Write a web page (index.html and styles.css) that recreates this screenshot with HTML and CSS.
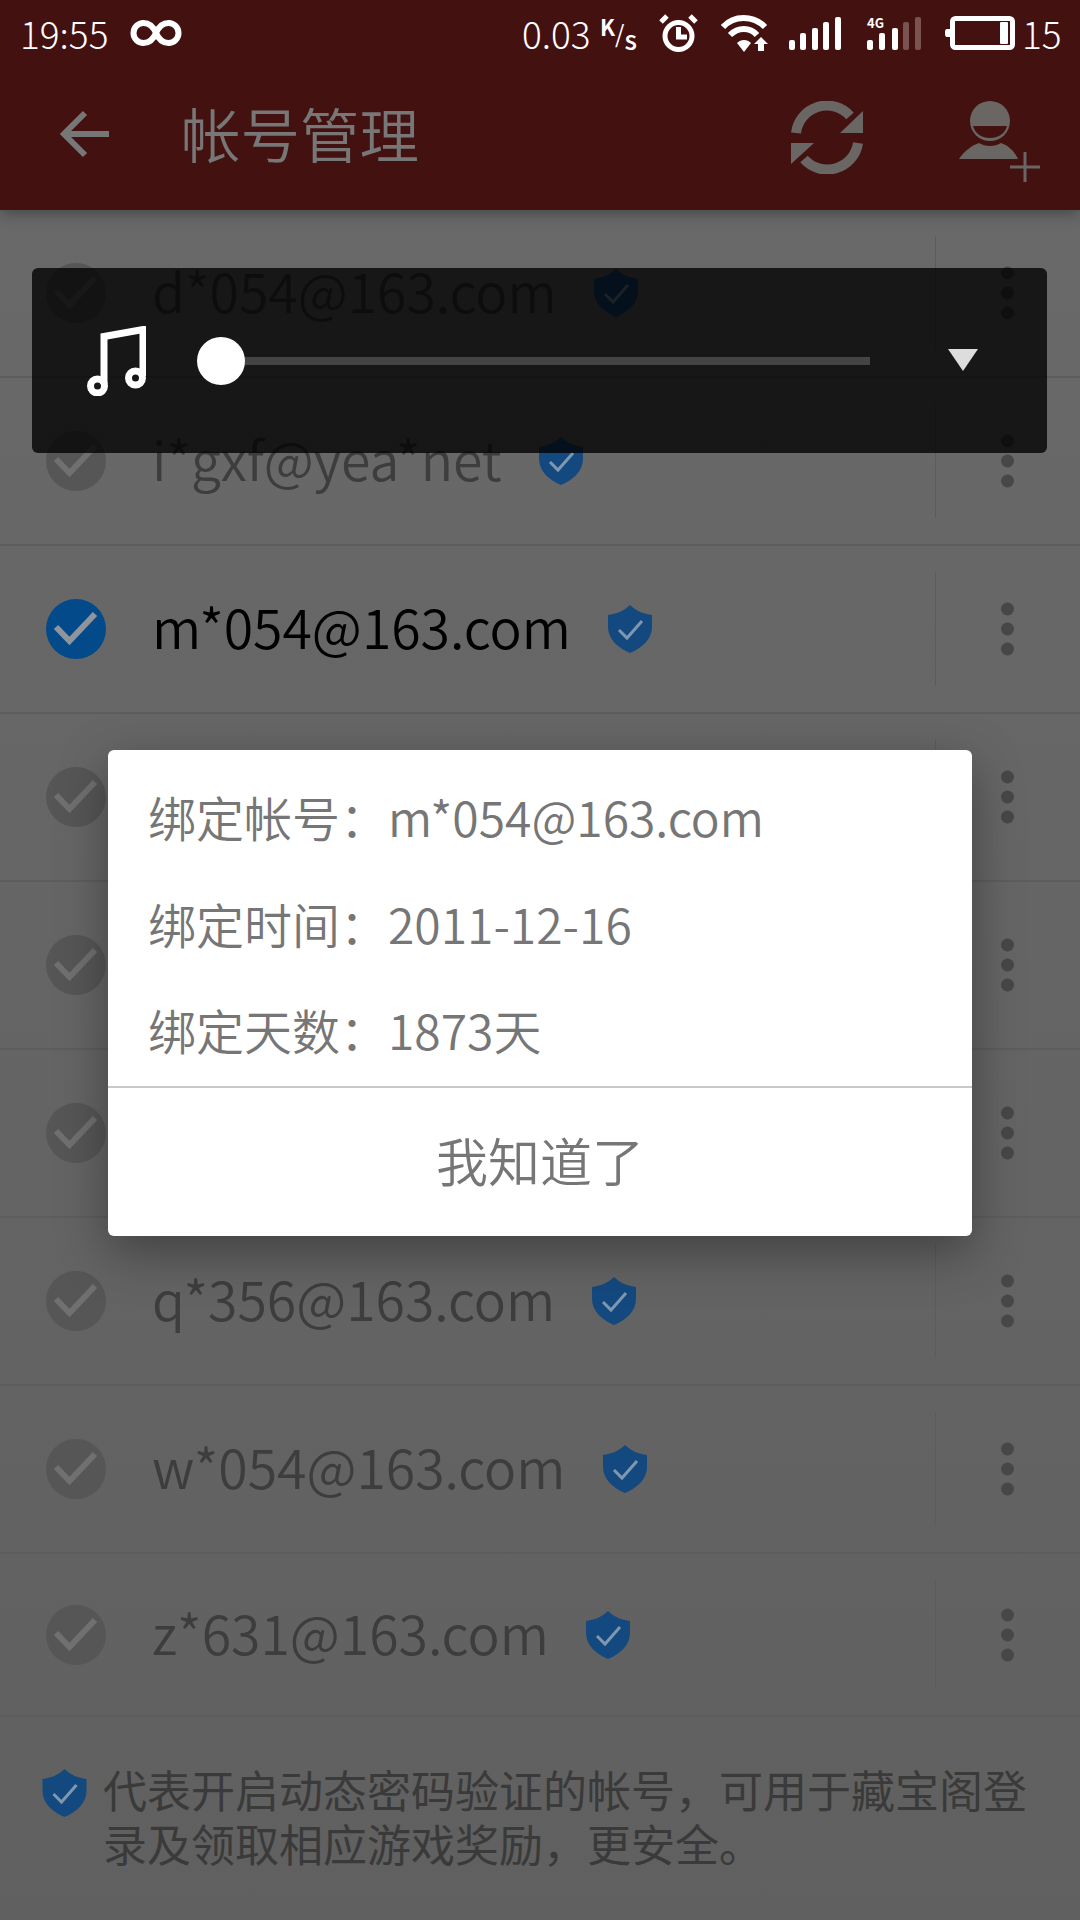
FILE: index.html
```html
<!DOCTYPE html>
<html lang="zh-CN">
<head>
<meta charset="utf-8">
<title>帐号管理</title>
<link rel="stylesheet" href="styles.css">
</head>
<body>
<svg class="defs" width="0" height="0" aria-hidden="true">
  <symbol id="check" viewBox="0 0 60 60">
    <circle class="check-disc" cx="30" cy="30" r="30"/>
    <path class="check-mark" d="M10 28 L23.500 42 L49 15"/>
  </symbol>
  <symbol id="shield" viewBox="0 0 44 48">
    <path class="shield-body" d="M22 0 C28 6 36 9 44 10 V22 C44 34 34 43 22 48 C10 43 0 34 0 22 V10 C8 9 16 6 22 0Z"/>
    <path class="shield-mark" d="M11 25 L19 33 L34 16"/>
  </symbol>
</svg>
<div class="screen">
  <header class="top">
    <div class="status">
      <div class="status-left">
        <span class="time">19:55</span>
        <svg class="infinity" viewBox="0 0 52 26"><path d="M26 13 C23 6 19 3 13.500 3 A10 10 0 0 0 13.500 23 C19 23 23 20 26 13 C29 6 33 3 38.500 3 A10 10 0 0 1 38.500 23 C33 23 29 20 26 13Z"/></svg>
      </div>
      <div class="status-right">
        <span class="rate">0.03</span>
        <span class="unit"><span class="unit-k">K</span><span class="unit-slash">/</span><span class="unit-s">s</span></span>
        <svg class="alarm" viewBox="0 0 39 38"><circle cx="19.500" cy="22" r="13.500"/><path d="M19.500 13 V23 H28"/><path d="M2 8 L8 2 M37 8 L31 2"/></svg>
        <svg class="wifi" viewBox="0 0 47 38"><path class="wifi-arc" d="M2 13 C13 1 32 1 44 13"/><path class="wifi-arc" d="M9 21 C17 13 29 13 36 21"/><path class="wifi-dot" d="M16 29 C20 25 26 25 30 29 L23 38Z"/><path class="wifi-dot" d="M40 23 L47 30 H43 V37 H37 V30 H33Z"/></svg>
        <svg class="signal" viewBox="0 0 55 34"><rect x="0" y="24" width="6" height="10" rx="2"/><rect x="11" y="17" width="6" height="17" rx="2"/><rect x="23" y="12" width="6" height="22" rx="2"/><rect x="34" y="6" width="6" height="28" rx="2"/><rect x="46" y="1" width="6" height="33" rx="2"/></svg>
        <div class="signal-4g">
          <span class="tag-4g">4G</span>
          <svg class="signal-b" viewBox="0 0 55 34"><rect x="0" y="24" width="6" height="10" rx="2"/><rect x="12" y="17" width="6" height="17" rx="2"/><rect x="25" y="12" width="6" height="22" rx="2"/><rect class="bar-off" x="36" y="6" width="6" height="28" rx="2"/><rect class="bar-off" x="48" y="1" width="6" height="33" rx="2"/></svg>
        </div>
        <svg class="battery" viewBox="0 0 70 34"><path class="battery-nub" d="M5 13 H2 Q0 13 0 16 V18 Q0 21 2 21 H5Z"/><rect class="battery-shell" x="7.500" y="2.500" width="60" height="29" rx="3"/><rect class="battery-level" x="55" y="6" width="8" height="22" rx="1"/></svg>
        <span class="level">15</span>
      </div>
    </div>
    <div class="toolbar">
      <svg class="back" viewBox="0 0 50 48"><path d="M49 24 H5 M25 3 L4 24 L25 45"/></svg>
      <h1 class="title">帐号管理</h1>
      <svg class="sync" viewBox="0 0 72 73"><path class="sync-arc" d="M5 32 A31 31 0 0 1 59 15"/><path class="sync-arc" d="M67 42 A31 31 0 0 1 13 58"/><path class="sync-head" d="M72 10 V32 H49Z M0 42 H23 L0 63Z"/></svg>
      <svg class="add-user" viewBox="0 0 82 82"><circle class="user-fill" cx="31" cy="20" r="20"/><path class="user-cut" d="M14 25 H48 C46 33 39 37 31 37 C23 37 16 33 14 25Z"/><path class="user-fill" d="M0 58 C6 49 14 44 20 42 C26 46 36 46 42 42 C48 44 55 49 59 58Z"/><path class="user-plus" d="M51 66 H81 M66 51 V81"/></svg>
    </div>
  </header>

  <main class="list">
    <div class="row">
      <svg class="tick"><use href="#check"/></svg>
      <span class="name">d*054@163.com</span>
      <svg class="badge"><use href="#shield"/></svg>
      <div class="more"><i></i><i></i><i></i></div>
    </div>
    <div class="row">
      <svg class="tick"><use href="#check"/></svg>
      <span class="name">i*gxf@yea*net</span>
      <svg class="badge"><use href="#shield"/></svg>
      <div class="more"><i></i><i></i><i></i></div>
    </div>
    <div class="row row-active">
      <svg class="tick"><use href="#check"/></svg>
      <span class="name">m*054@163.com</span>
      <svg class="badge"><use href="#shield"/></svg>
      <div class="more"><i></i><i></i><i></i></div>
    </div>
    <div class="row">
      <svg class="tick"><use href="#check"/></svg>
      <div class="more"><i></i><i></i><i></i></div>
    </div>
    <div class="row">
      <svg class="tick"><use href="#check"/></svg>
      <div class="more"><i></i><i></i><i></i></div>
    </div>
    <div class="row">
      <svg class="tick"><use href="#check"/></svg>
      <div class="more"><i></i><i></i><i></i></div>
    </div>
    <div class="row">
      <svg class="tick"><use href="#check"/></svg>
      <span class="name">q*356@163.com</span>
      <svg class="badge"><use href="#shield"/></svg>
      <div class="more"><i></i><i></i><i></i></div>
    </div>
    <div class="row">
      <svg class="tick"><use href="#check"/></svg>
      <span class="name">w*054@163.com</span>
      <svg class="badge"><use href="#shield"/></svg>
      <div class="more"><i></i><i></i><i></i></div>
    </div>
    <div class="row row-last">
      <svg class="tick"><use href="#check"/></svg>
      <span class="name">z*631@163.com</span>
      <svg class="badge"><use href="#shield"/></svg>
      <div class="more"><i></i><i></i><i></i></div>
    </div>
  </main>

  <footer class="note">
    <svg class="note-badge"><use href="#shield"/></svg>
    <p class="note-text">代表开启动态密码验证的帐号，可用于藏宝阁登录及领取相应游戏奖励，更安全。</p>
  </footer>

  <div class="player">
    <svg class="note-icon" viewBox="0 0 59 70"><circle cx="10.500" cy="60" r="7"/><circle cx="48.500" cy="52" r="7"/><path d="M17 58 V10.500 L56 3.500 V50"/></svg>
    <div class="track"><span class="thumb"></span></div>
    <span class="caret"></span>
  </div>

  <section class="dialog">
    <div class="dialog-body">
      <p class="info">绑定帐号：m*054@163.com</p>
      <p class="info">绑定时间：2011-12-16</p>
      <p class="info">绑定天数：1873天</p>
    </div>
    <div class="dialog-action">我知道了</div>
  </section>
</div>
</body>
</html>
```
FILE: styles.css
```css
* { box-sizing: border-box; }
html, body { margin: 0; padding: 0; }
body { background: #666; font-family: "Noto Sans CJK SC", "Noto Sans", sans-serif; }
.defs { position: absolute; }
.screen { position: relative; width: 1080px; height: 1920px; overflow: hidden; display: flex; flex-direction: column; background: linear-gradient(#6a6a6a, #606060); }

.top { height: 210px; background: #431110; box-shadow: 0 3px 14px rgba(20, 30, 25, .45); position: relative; z-index: 1; flex: none; }
.status { height: 66px; display: flex; justify-content: space-between; align-items: center; padding: 0 22px 0 20px; color: #fff; }
.status-left, .status-right { display: flex; align-items: center; }
.time { font-size: 37px; font-weight: 300; line-height: 66px; width: 110px; }
.infinity { width: 52px; height: 26px; fill: none; stroke: #fff; stroke-width: 6; }
.rate { font-size: 37px; font-weight: 300; line-height: 66px; width: 78px; }
.unit { display: flex; width: 59px; height: 36px; font-size: 24px; font-weight: 500; line-height: 1; }
.unit-k { font-size: 22px; line-height: 22px; font-weight: 700; }
.unit-slash { line-height: 36px; font-weight: 400; }
.unit-s { align-self: flex-end; line-height: 24px; font-size: 26px; }
.alarm { width: 39px; height: 38px; margin-right: 23px; fill: none; stroke: #fff; stroke-width: 5; }
.wifi { width: 47px; height: 38px; margin-right: 21px; fill: none; }
.wifi-arc { stroke: #fff; stroke-width: 6; }
.wifi-dot { fill: #fff; }
.signal { width: 55px; height: 34px; margin-right: 23px; fill: #fff; }
.signal-4g { position: relative; width: 55px; height: 34px; margin-right: 23px; }
.signal-b { display: block; width: 55px; height: 34px; fill: #fff; }
.bar-off { fill: #7a5350; }
.tag-4g { position: absolute; left: 0; top: 0; font-size: 13px; font-weight: 700; line-height: 13px; }
.battery { width: 70px; height: 34px; margin-right: 7px; fill: #fff; }
.battery-shell { fill: none; stroke: #fff; stroke-width: 5; }
.level { font-size: 37px; font-weight: 300; line-height: 66px; width: 36px; }

.toolbar { height: 144px; display: flex; align-items: center; padding-left: 60px; color: #777; }
.back { width: 50px; height: 48px; fill: none; stroke: #777; stroke-width: 6; flex: none; margin-top: -8px; }
.title { margin: -11px 0 0 71px; font-size: 59.500px; font-weight: 350; line-height: 1; letter-spacing: 0; flex: 1; color: #777; }
.sync { width: 72px; height: 73px; flex: none; margin: -1px 96px 0 0; }
.sync-arc { fill: none; stroke: #6a6664; stroke-width: 10; }
.sync-head { fill: #6a6664; }
.add-user { width: 82px; height: 82px; flex: none; margin: 7px 39px 0 0; }
.user-fill { fill: #6a6664; }
.user-cut { fill: #431110; }
.user-plus { fill: none; stroke: #6a6664; stroke-width: 3; }

.list { display: flex; flex-direction: column; flex: none; }
.row { --disc: #565656; --mark: #707070; position: relative; height: 168px; display: flex; align-items: center; padding-left: 46px; border-bottom: 2px solid #5d5d5d; color: #3d3d3d; }
.row-last { height: 163px; }
.row::after { content: ""; position: absolute; left: 935px; top: 26px; bottom: 26px; width: 1px; background: #5c5c5c; }
.tick { width: 60px; height: 60px; flex: none; }
.check-disc { fill: var(--disc); }
.check-mark { fill: none; stroke: var(--mark); stroke-width: 6; }
.row-active { --disc: #034a8a; --mark: #8f959a; color: #000; }
.name { margin: -6px 0 0 46px; font-size: 53.500px; font-weight: 350; line-height: 1; }
.badge { width: 44px; height: 48px; margin-left: 37px; flex: none; }
.shield-body { fill: #14497f; }
.shield-mark { fill: none; stroke: #7f98b0; stroke-width: 3; }
.more { position: absolute; left: 1001px; top: 50%; transform: translateY(-50%); display: flex; flex-direction: column; gap: 7px; }
.more i { display: block; width: 13px; height: 13px; border-radius: 50%; background: #474747; }

.note { flex: 1; display: flex; align-items: flex-start; padding: 45px 40px 0 42px; gap: 16px; }
.note-badge { width: 45px; height: 48px; flex: none; margin-top: 7px; }
.note-text { margin: 0; font-size: 44px; font-weight: 400; line-height: 54px; color: #3a3a3a; }

.player { position: absolute; left: 32px; top: 268px; width: 1015px; height: 185px; border-radius: 6px; background: rgba(0, 0, 0, .78); z-index: 2; }
.note-icon { position: absolute; left: 55px; top: 58px; width: 59px; height: 70px; fill: none; stroke: #fff; stroke-width: 7; }
.track { position: absolute; left: 200px; top: 89px; width: 638px; height: 8px; background: #444; }
.thumb { position: absolute; left: -35px; top: -20px; width: 48px; height: 48px; border-radius: 50%; background: #fff; }
.caret { position: absolute; left: 916px; top: 81px; width: 0; height: 0; border-left: 15px solid transparent; border-right: 15px solid transparent; border-top: 22px solid #ddd; }

.dialog { position: absolute; left: 108px; top: 750px; width: 864px; height: 486px; background: #fff; border-radius: 6px; box-shadow: 0 16px 50px rgba(0, 0, 0, .35); z-index: 2; display: flex; flex-direction: column; color: #767676; }
.dialog-body { height: 338px; padding: 13px 0 0 40px; border-bottom: 2px solid #c9c9c9; flex: none; }
.info { margin: 0; font-size: 48px; font-weight: 350; line-height: 106.500px; }
.dialog-action { flex: 1; display: flex; align-items: center; justify-content: center; font-size: 52px; font-weight: 350; padding-bottom: 6px; }
```
